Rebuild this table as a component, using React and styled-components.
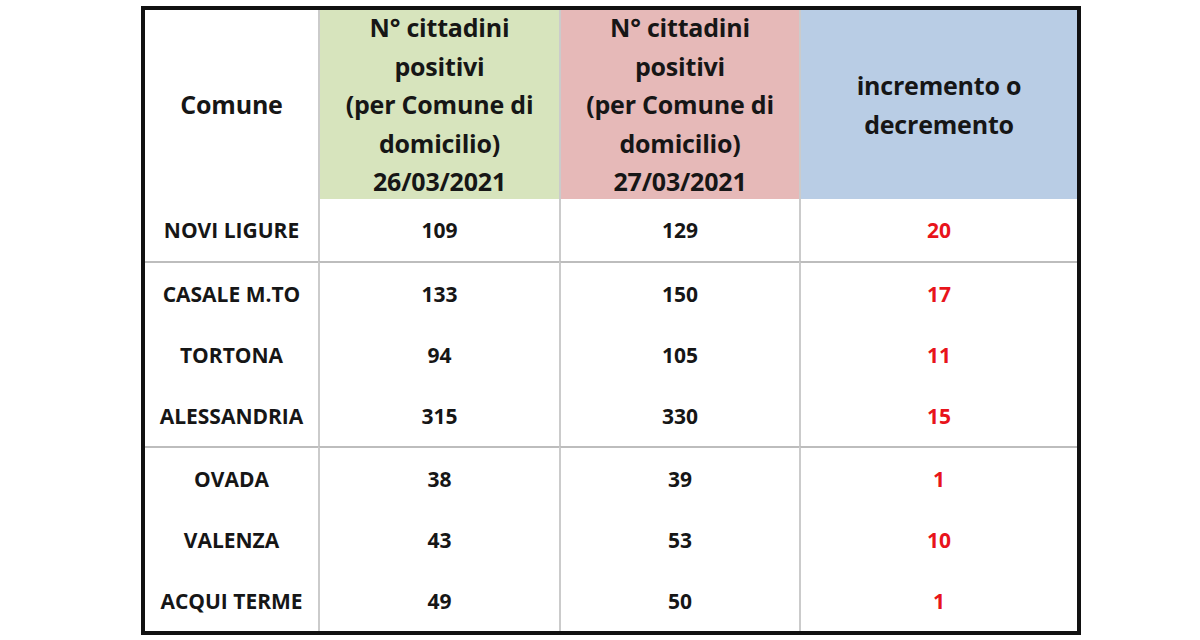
import React from 'react';
import styled, { createGlobalStyle } from 'styled-components';

const GlobalStyle = createGlobalStyle`
	html, body {
		margin: 0;
		padding: 0;
		background: #fff;
	}
	body {
		font-family: 'Open Sans', 'Noto Sans', sans-serif;
		color: #161616;
	}
`;

const header = [
	{ bg: '#fff', lines: ['Comune'] },
	{
		bg: '#d7e4bd',
		lines: ['N° cittadini', 'positivi', '(per Comune di', 'domicilio)', '26/03/2021'],
	},
	{
		bg: '#e6b9b8',
		lines: ['N° cittadini', 'positivi', '(per Comune di', 'domicilio)', '27/03/2021'],
	},
	{ bg: '#b9cde5', lines: ['incremento o', 'decremento'] },
];

const rows = [
	{ name: 'NOVI LIGURE', a: 109, b: 129, sep: false },
	{ name: 'CASALE M.TO', a: 133, b: 150, sep: true },
	{ name: 'TORTONA', a: 94, b: 105, sep: false },
	{ name: 'ALESSANDRIA', a: 315, b: 330, sep: false },
	{ name: 'OVADA', a: 38, b: 39, sep: true },
	{ name: 'VALENZA', a: 43, b: 53, sep: false },
	{ name: 'ACQUI TERME', a: 49, b: 50, sep: false },
];

const App = () => {
	return (
		<>
			<GlobalStyle />
			<Page>
				<Table>
					{header.map((h, i) => (
						<HeadCell key={i} $bg={h.bg} $first={i === 0}>
							{h.lines.map((l) => (
								<span key={l}>{l}</span>
							))}
						</HeadCell>
					))}
					{rows.map((r) => (
						<React.Fragment key={r.name}>
							<Cell $first $sep={r.sep}>
								{r.name}
							</Cell>
							<Cell $sep={r.sep}>{r.a}</Cell>
							<Cell $sep={r.sep}>{r.b}</Cell>
							<Cell $sep={r.sep} $red>
								{r.b - r.a}
							</Cell>
						</React.Fragment>
					))}
				</Table>
			</Page>
		</>
	);
};

const Page = styled.div`
	width: 1200px;
	height: 640px;
	padding: 6px 0 0 141px;
	box-sizing: border-box;
`;

const Table = styled.div`
	width: 940px;
	height: 629px;
	box-sizing: border-box;
	border: 4px solid #111;
	display: grid;
	grid-template-columns: 173px 241px 240px 278px;
	grid-template-rows: 189px 62px 63px 61px 61px 63px 61px 61px;
	background: #fff;
`;

const HeadCell = styled.div`
	display: flex;
	flex-direction: column;
	align-items: center;
	justify-content: center;
	box-sizing: border-box;
	background: ${(p) => p.$bg};
	border-left: ${(p) => (p.$first ? 'none' : '2px solid #cbcbcb')};
	font-size: 25px;
	font-weight: 700;
	line-height: 38.5px;
	text-align: center;
	white-space: nowrap;
	letter-spacing: -0.2px;
`;

const Cell = styled.div`
	display: flex;
	align-items: center;
	justify-content: center;
	box-sizing: border-box;
	border-left: ${(p) => (p.$first ? 'none' : '2px solid #cbcbcb')};
	border-top: ${(p) => (p.$sep ? '2px solid #bdbdbd' : 'none')};
	font-size: 21px;
	font-weight: 700;
	color: ${(p) => (p.$red ? '#e8141b' : '#161616')};
	white-space: nowrap;
`;

export default App;
